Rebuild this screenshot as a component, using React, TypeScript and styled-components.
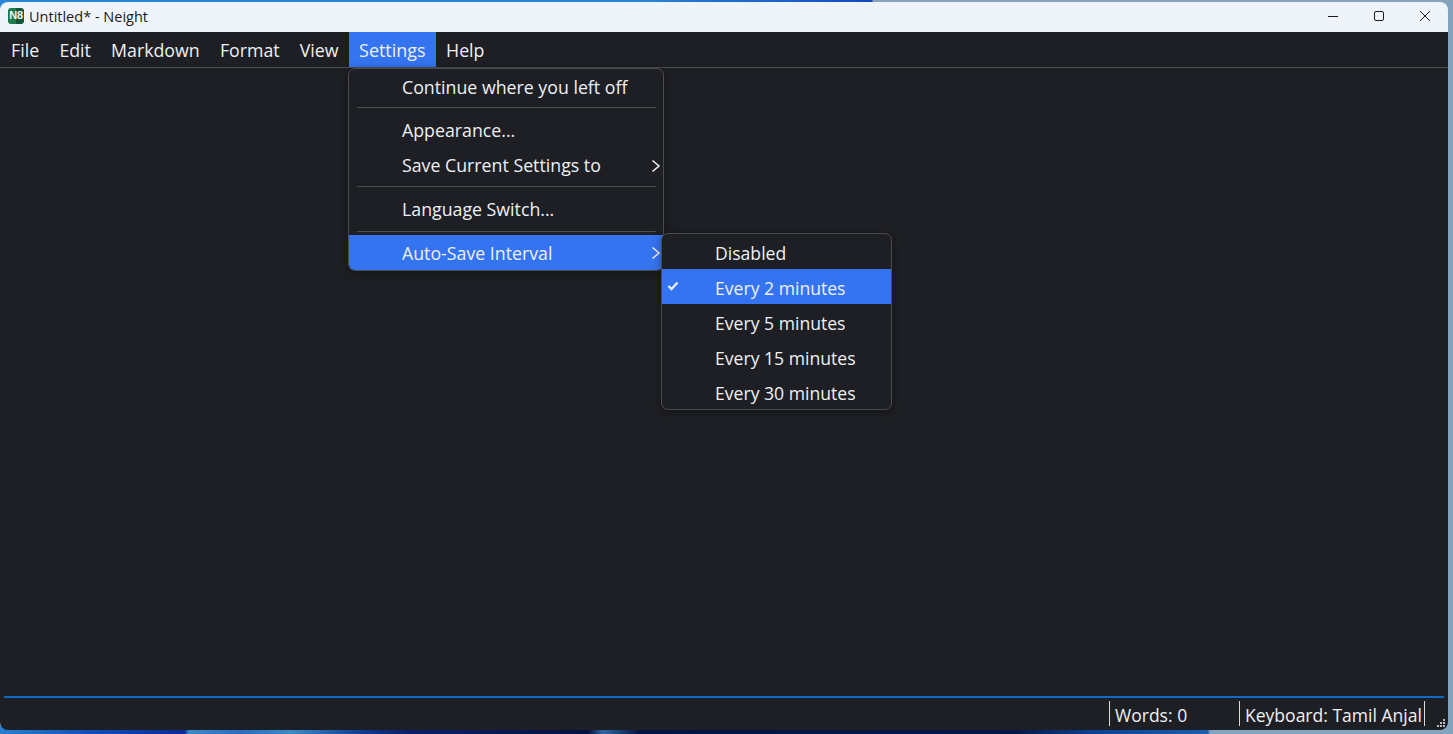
import styled, { createGlobalStyle } from 'styled-components';

const GlobalStyle = createGlobalStyle`
  html, body, #root {
    height: 100%;
    margin: 0;
    overflow: hidden;
  }

  body {
    font-family: 'Open Sans', 'Liberation Sans', sans-serif;
  }
`;

const Desktop = styled('div')`
  background:
    linear-gradient(90deg, #2a7fd0 0%, #1050b8 6%, #082a98 12.7%, #3a8ac8 13%, #2a6cc0 16.5%, #3a8ac8 20%, #0e3a90 25%, #0a1f6a 28%, #06123f 40.5%, #3068a8 41.5%, #041440 44%, #06184a 70%, #0d4090 75%, #1a5fae 83.1%, #86a3bd 83.3%) bottom / 100% 8px no-repeat,
    linear-gradient(90deg, #2a86d8 0%, #2a86d8 44%, #1f6fd0 49%, #1c62cc 54%, #1248b8 60%, #86a3bd 60.1%) top / 100% 8px no-repeat,
    #86a3bd;
  box-sizing: border-box;
  height: 100vh;
  padding: 2px 5px 4px 0;
  width: 100vw;
`;

const Window = styled('div')`
  border-radius: 8px;
  display: flex;
  flex-direction: column;
  height: 100%;
  overflow: hidden;
  position: relative;
`;

const TitleBar = styled('header')`
  align-items: center;
  background-color: #eff4fb;
  box-sizing: border-box;
  display: flex;
  flex: 0 0 30px;
  padding: 0 0 2px 8px;
`;

const AppIcon = styled('span')`
  background: linear-gradient(90deg, #1f7a4c 0 50%, #14563a 50% 100%);
  border-radius: 3px;
  color: #f4f8f5;
  flex: 0 0 16px;
  font-family: 'Liberation Sans', sans-serif;
  font-size: 11px;
  font-weight: 700;
  height: 16px;
  letter-spacing: -0.4px;
  line-height: 15px;
  text-align: center;
`;

const WindowTitle = styled('span')`
  color: #1a1a1a;
  flex: 1;
  font-size: 14.5px;
  margin-left: 5px;
`;

const WindowButton = styled('button')`
  align-items: center;
  background: none;
  border: 0;
  display: flex;
  height: 28px;
  justify-content: center;
  padding: 0;
  width: 46px;
`;

const MenuBar = styled('nav')`
  background-color: #1e1f24;
  border-bottom: 1px solid #4b4c50;
  display: flex;
  flex: 0 0 35px;
  padding-left: 1px;
`;

const MenuItem = styled('div')<{ $active?: boolean }>`
  align-items: center;
  background-color: ${ props => props.$active ? '#3574f0' : 'transparent' };
  color: #eef0f3;
  display: flex;
  font-size: ${ props => props.$active ? 17.95 : 17.75 }px;
  padding: 0 ${ props => props.$active ? 10.4 : 10.1 }px;
`;

const Editor = styled('main')`
  background-color: #1e1f24;
  flex: 1;
`;

const StatusBar = styled('footer')`
  align-items: center;
  background-color: #1e1f24;
  display: flex;
  flex: 0 0 34px;
  justify-content: flex-end;
  padding-right: 23px;
  position: relative;
`;

const StatusRule = styled('div')`
  background-color: #0a6cc4;
  height: 2px;
  left: 4px;
  position: absolute;
  right: 4px;
  top: 0;
`;

const StatusCell = styled('div')<{ $width: number }>`
  border-left: 1px solid #d6d8da;
  box-sizing: border-box;
  color: #eef0f3;
  font-size: 17.55px;
  height: 25px;
  line-height: 28px;
  padding-left: 5px;
  white-space: nowrap;
  width: ${ props => props.$width }px;
`;

const StatusEnd = styled('div')`
  background-color: #d6d8da;
  height: 25px;
  width: 1px;
`;

const Grip = styled('svg')`
  bottom: 2px;
  position: absolute;
  right: 2px;
`;

const Dropdown = styled('div')<{ $left: number; $top: number; $width: number }>`
  background-color: #1e1f24;
  border: 1px solid #4b4c50;
  border-radius: 7px;
  box-shadow: 0 2px 10px rgba(0, 0, 0, 0.35);
  box-sizing: border-box;
  left: ${ props => props.$left }px;
  overflow: hidden;
  position: absolute;
  top: ${ props => props.$top }px;
  width: ${ props => props.$width }px;
  z-index: 2;
`;

const MainMenu = styled(Dropdown)`
  padding-top: 1px;
`;

const DropItem = styled('div')<{ $active?: boolean }>`
  align-items: center;
  background-color: ${ props => props.$active ? '#3574f0' : 'transparent' };
  box-sizing: border-box;
  color: #eef0f3;
  display: flex;
  font-size: 17.75px;
  height: 35px;
  padding-bottom: ${ props => props.$active ? 0 : 2 }px;
  padding-left: 53px;
  position: relative;
`;

const SubItem = styled(DropItem)`
  font-size: 17.6px;
  padding-bottom: 0;
  padding-top: 2px;
`;

const Separator = styled('div')<{ $above: number; $below: number }>`
  background-color: #4b4c50;
  height: 1px;
  margin: ${ props => props.$above }px 7px ${ props => props.$below }px 8px;
`;

const Chevron = styled('svg')`
  position: absolute;
  right: 2px;
  top: 11px;
`;

const Check = styled('svg')`
  left: 5px;
  position: absolute;
  top: 12px;
`;

const chevron = (
  <Chevron width="10" height="14" viewBox="0 0 10 14" fill="none" stroke="#eef0f3" strokeWidth="1.6">
    <path d="M1.5 1.5 L8 7 L1.5 12.5" />
  </Chevron>
);

const INTERVALS = ['Disabled', 'Every 2 minutes', 'Every 5 minutes', 'Every 15 minutes', 'Every 30 minutes'];

const MENUS = ['File', 'Edit', 'Markdown', 'Format', 'View', 'Settings', 'Help'];

const App: React.FC = () => {
  return (
    <Desktop>
      <GlobalStyle />
      <Window>
        <TitleBar>
          <AppIcon>N8</AppIcon>
          <WindowTitle>Untitled* - Neight</WindowTitle>
          <WindowButton aria-label="Minimize">
            <svg width="10" height="10" viewBox="0 0 10 10" stroke="#1a1a1a" strokeWidth="1"><path d="M0 5.5 H10" /></svg>
          </WindowButton>
          <WindowButton aria-label="Maximize">
            <svg width="10" height="10" viewBox="0 0 10 10" fill="none" stroke="#1a1a1a" strokeWidth="1"><rect x="0.5" y="0.5" width="9" height="9" rx="1.5" /></svg>
          </WindowButton>
          <WindowButton aria-label="Close">
            <svg width="10" height="10" viewBox="0 0 10 10" stroke="#1a1a1a" strokeWidth="1"><path d="M0 0 L10 10 M10 0 L0 10" /></svg>
          </WindowButton>
        </TitleBar>
        <MenuBar>
          { MENUS.map((name) => <MenuItem key={ name } $active={ name === 'Settings' }>{ name }</MenuItem>) }
        </MenuBar>
        <Editor />
        <StatusBar>
          <StatusRule />
          <StatusCell $width={ 130 }>Words: 0</StatusCell>
          <StatusCell $width={ 185 }>Keyboard: Tamil Anjal</StatusCell>
          <StatusEnd />
          <Grip width="10" height="9" viewBox="0 0 10 9" fill="#b9bbbe">
            <rect x="7" y="0" width="2" height="2" />
            <rect x="4" y="3" width="2" height="2" />
            <rect x="7" y="3" width="2" height="2" />
            <rect x="1" y="6" width="2" height="2" />
            <rect x="4" y="6" width="2" height="2" />
            <rect x="7" y="6" width="2" height="2" />
          </Grip>
        </StatusBar>
        <MainMenu $left={ 348 } $top={ 66 } $width={ 316 }>
          <DropItem>Continue where you left off</DropItem>
          <Separator $above={ 2 } $below={ 5 } />
          <DropItem>Appearance...</DropItem>
          <DropItem>Save Current Settings to{ chevron }</DropItem>
          <Separator $above={ 3 } $below={ 5 } />
          <DropItem>Language Switch...</DropItem>
          <Separator $above={ 4 } $below={ 3 } />
          <DropItem $active>Auto-Save Interval{ chevron }</DropItem>
        </MainMenu>
        <Dropdown $left={ 661 } $top={ 231 } $width={ 231 }>
          { INTERVALS.map((label, index) => (
            <SubItem key={ label } $active={ index === 1 }>
              { index === 1 &&
                <Check width="12" height="12" viewBox="0 0 12 12" fill="none" stroke="#e8ecf5" strokeWidth="2.4">
                  <path d="M1.5 5 L4.5 8 L10.5 1.5" />
                </Check>
              }
              { label }
            </SubItem>
          )) }
        </Dropdown>
      </Window>
    </Desktop>
  );
};

export default App;
